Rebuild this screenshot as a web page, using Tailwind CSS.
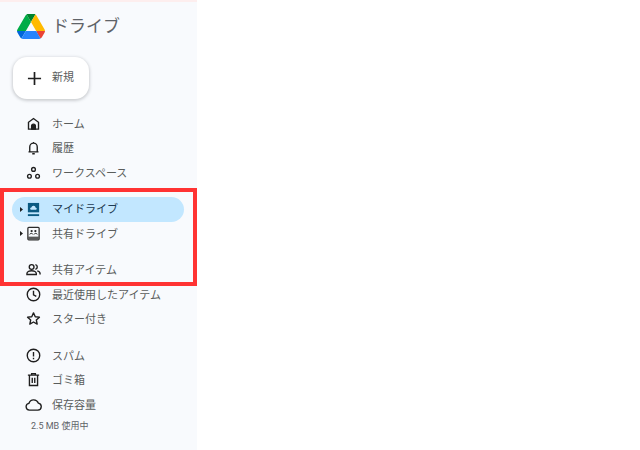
<!DOCTYPE html>
<html><head><meta charset="utf-8"><script src="https://cdn.jsdelivr.net/npm/@tailwindcss/browser@4"></script></head>
<body class="bg-white">
<div class="relative w-[640px] h-[450px] overflow-hidden bg-white font-['Roboto','Noto_Sans_CJK_JP',sans-serif] text-[#5a5d5c]">
<div class="w-[197px] h-[450px] bg-[#f8fafd] flex flex-col">
<div class="h-[2px] bg-[#fdeeee]"></div>
<div class="flex items-center h-[48px] pl-[17px] gap-[7px]">
<svg width="28" height="25" viewBox="0 0 87.3 78"><path d="m6.6 66.85 3.85 6.65c.8 1.4 1.95 2.5 3.3 3.3l13.75-23.8h-27.5c0 1.55.4 3.1 1.2 4.5z" fill="#0066da"/><path d="m43.65 25-13.75-23.8c-1.35.8-2.5 1.9-3.3 3.3l-25.4 44a9.06 9.06 0 0 0 -1.2 4.5h27.5z" fill="#00ac47"/><path d="m73.55 76.8c1.35-.8 2.5-1.9 3.3-3.3l1.6-2.75 7.65-13.25c.8-1.4 1.2-2.95 1.2-4.5h-27.5l5.85 11.5z" fill="#ea4335"/><path d="m43.65 25 13.75-23.8c-1.35-.8-2.9-1.2-4.5-1.2h-18.5c-1.6 0-3.15.45-4.5 1.2z" fill="#00832d"/><path d="m59.8 53h-32.3l-13.75 23.8c1.35.8 2.9 1.2 4.5 1.2h50.8c1.6 0 3.15-.45 4.5-1.2z" fill="#2684fc"/><path d="m73.4 26.500-12.7-22c-.8-1.4-1.95-2.5-3.3-3.3l-13.75 23.8 16.15 28h27.45c0-1.55-.4-3.1-1.2-4.5z" fill="#ffba00"/></svg>
<span class="text-[17px] leading-[24px] text-[#5f6368]">ドライブ</span>
</div>
<div class="pl-[13px] pt-[7px]">
<div class="w-[76px] h-[42px] bg-white rounded-[14px] shadow-[0_1px_3px_1px_rgba(60,64,67,.22)] flex items-center pl-[14px] gap-[10px]">
<svg width="15" height="15" viewBox="0 0 16 16"><path d="M8 1v14M1 8h14" stroke="#1f1f1f" stroke-width="1.800"/></svg>
<span class="text-[11px]">新規</span>
</div>
</div>
<div class="pt-[12px] flex flex-col">
<div class="flex items-center h-[24.500px] pl-[26px] gap-[11px]">
<svg class="w-[15px] h-[15px]" viewBox="0 0 24 24" fill="none" stroke="#1f1f1f" stroke-width="2.200"><path d="M4 21V10l8-6 8 6v11z"/><path d="M9 21v-5a3 3 0 0 1 6 0v5z" fill="#1f1f1f"/></svg>
<span class="text-[11px] mt-[3px]">ホーム</span>
</div>
<div class="flex items-center h-[24.500px] pl-[26px] gap-[11px]">
<svg class="w-[15px] h-[15px]" viewBox="0 0 24 24" fill="none" stroke="#1f1f1f" stroke-width="2.200"><path d="M4 19h16M6 19v-8a6 6 0 0 1 12 0v8M10 22h4M12 5V3"/></svg>
<span class="text-[11px] mt-[3px]">履歴</span>
</div>
<div class="flex items-center h-[24.500px] pl-[26px] gap-[11px]">
<svg class="w-[15px] h-[15px]" viewBox="0 0 24 24" fill="none" stroke="#1f1f1f" stroke-width="2.200"><circle cx="12" cy="7" r="3"/><circle cx="5.500" cy="18" r="3"/><circle cx="18.500" cy="18" r="3"/></svg>
<span class="text-[11px] mt-[3px]">ワークスペース</span>
</div>
</div>
<div class="pt-[12px] flex flex-col">
<div class="flex items-center h-[25px] ml-[12px] w-[172px] rounded-full bg-[#c2e7ff] pl-[8px]">
<svg width="3" height="5" viewBox="0 0 3 5"><path d="M0 0l3 2.500-3 2.500z" fill="#1f1f1f"/></svg>
<svg class="w-[15px] h-[15px] ml-[3px]" viewBox="0 0 24 24"><path d="M3 1.500h18v15H3z" fill="#0b5a82"/><path d="M3 19.500h18v3H3z" fill="#0b5a82"/><path d="M8 12.500a2 2 0 0 1 .5-3.900 3.600 3.600 0 0 1 7 .4 1.800 1.800 0 0 1 .5 3.500z" fill="#c2e7ff"/></svg>
<span class="text-[11px] text-[#1d3a52] ml-[11px] mt-[2px]">マイドライブ</span>
</div>
<div class="flex items-center h-[24px] ml-[12px] pl-[8px]">
<svg width="3" height="5" viewBox="0 0 3 5"><path d="M0 0l3 2.500-3 2.500z" fill="#1f1f1f"/></svg>
<svg class="w-[15px] h-[15px] ml-[3px]" viewBox="0 0 24 24" fill="none" stroke="#2a2a2a" stroke-width="2"><rect x="3" y="2" width="18" height="20" rx="1.500"/><circle cx="9" cy="8" r="1.800" fill="#2a2a2a" stroke="none"/><circle cx="15" cy="8" r="1.800" fill="#2a2a2a" stroke="none"/><path d="M6 13.500c0-2.200 5-2.200 5 0M13 13.500c0-2.200 5-2.200 5 0" stroke-width="1.600"/><path d="M3 17h18v4.500H3z" fill="#5a5a5a" stroke="none"/></svg>
<span class="text-[11px] ml-[11px] mt-[3px]">共有ドライブ</span>
</div>
</div>
<div class="pt-[12px] flex flex-col">
<div class="flex items-center h-[24.500px] pl-[26px] gap-[11px]">
<svg class="w-[15px] h-[15px]" viewBox="0 0 24 24" fill="none" stroke="#1f1f1f" stroke-width="2.200"><circle cx="9" cy="8" r="3.800"/><path d="M1.500 20v-1.500c0-3 4.500-4.500 7.500-4.500s7.500 1.500 7.500 4.500V20zM15 4.200a3.900 3.900 0 0 1 0 7.600M18 14.200c2.800.7 4.500 2 4.500 4.300V20"/></svg>
<span class="text-[11px] mt-[3px]">共有アイテム</span>
</div>
<div class="flex items-center h-[24.500px] pl-[26px] gap-[11px]">
<svg class="w-[15px] h-[15px]" viewBox="0 0 24 24" fill="none" stroke="#1f1f1f" stroke-width="2.200"><circle cx="12" cy="12" r="10"/><path d="M12 6v6.500l4.500 2.500"/></svg>
<span class="text-[11px] mt-[3px]">最近使用したアイテム</span>
</div>
<div class="flex items-center h-[24.500px] pl-[26px] gap-[11px]">
<svg class="w-[15px] h-[15px]" viewBox="0 0 24 24" fill="none" stroke="#1f1f1f" stroke-width="2.200" stroke-linejoin="round"><path d="M12 3l2.800 6.200 6.700.7-5 4.500 1.400 6.600L12 17.600 6.100 21l1.400-6.600-5-4.500 6.700-.7z"/></svg>
<span class="text-[11px] mt-[3px]">スター付き</span>
</div>
</div>
<div class="pt-[12px] flex flex-col">
<div class="flex items-center h-[24.500px] pl-[26px] gap-[11px]">
<svg class="w-[15px] h-[15px]" viewBox="0 0 24 24" fill="none" stroke="#1f1f1f" stroke-width="2.200"><circle cx="12" cy="12" r="10"/><path d="M12 6.500v7M12 15.500v2.500"/></svg>
<span class="text-[11px] mt-[3px]">スパム</span>
</div>
<div class="flex items-center h-[24.500px] pl-[26px] gap-[11px]">
<svg class="w-[15px] h-[15px]" viewBox="0 0 24 24" fill="none" stroke="#1f1f1f" stroke-width="2.200"><path d="M3 5h18M9 5V2.500h6V5M5.500 5v16.500h13V5M10 9v8.500M14 9v8.500"/></svg>
<span class="text-[11px] mt-[3px]">ゴミ箱</span>
</div>
<div class="flex items-center h-[24.500px] pl-[25px] gap-[10px]">
<svg class="w-[17px] h-[15px]" viewBox="0 0 27 24" fill="none" stroke="#1f1f1f" stroke-width="2.200"><path d="M7 21a5.500 5.500 0 0 1-.8-10.900 8 8 0 0 1 15-.4A5.700 5.700 0 0 1 20.500 21z"/></svg>
<span class="text-[11px] mt-[3px]">保存容量</span>
</div>
<div class="pl-[31px] pt-[1px] text-[9px] leading-[16px] text-[#5f6368]">2.5 MB 使用中</div>
</div>
</div>
<div class="absolute left-0 top-[188px] w-[197px] h-[98px] border-[4px] border-[#ff3333]"></div>
</div>
</body></html>
